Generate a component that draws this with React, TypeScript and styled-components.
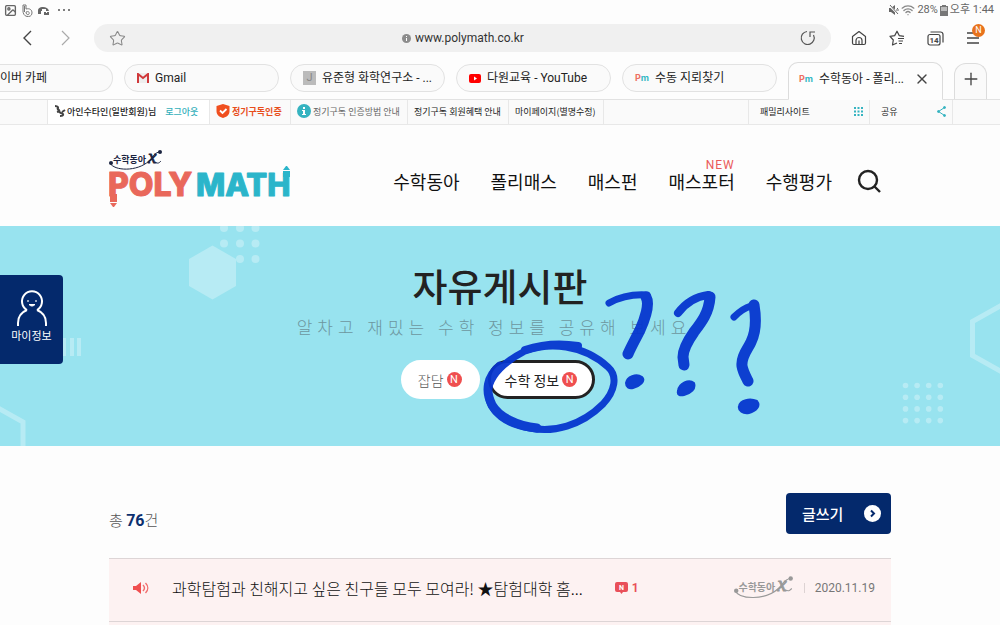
import React from "react";
import styled, { createGlobalStyle, css } from "styled-components";
import { Star, X, Plus, Wifi, Image as ImageIcon } from "lucide-react";

const sans = `"Noto Sans CJK KR", "Noto Sans", sans-serif`;
const ui = `Roboto, "Noto Sans CJK KR", sans-serif`;

const GlobalStyle = createGlobalStyle`
  *, *::before, *::after { box-sizing: border-box; }
  body { margin: 0; background: #fdfdfd; color: #222; font-family: ${sans}; overflow-x: hidden; }
  button, input { font: inherit; color: inherit; }
  button { border: 0; padding: 0; background: none; cursor: pointer; }
  a { color: inherit; text-decoration: none; }
  h1, p { margin: 0; }
  svg { display: block; flex: none; }
`;

/* Device status bar */
const StatusBar = styled.div`
  display: flex;
  justify-content: space-between;
  align-items: center;
  height: 20px;
  padding: 0 6px 0 4px;
  font: 11px/20px ${ui};
  color: #666;
`;
const StatusGroup = styled.div<{ $gap: number }>`
  display: flex;
  align-items: center;
  gap: ${(p) => p.$gap}px;
`;

/* Browser toolbar */
const Toolbar = styled.div`
  display: flex;
  align-items: center;
  height: 36px;
  padding: 0 16px;
  color: #444;
`;
const IconButton = styled.button<{ $faded?: boolean }>`
  position: relative;
  display: flex;
  align-items: center;
  justify-content: center;
  width: 22px;
  height: 28px;
  flex: none;
  color: ${(p) => (p.$faded ? "#aaa" : "#444")};
`;
const HistoryButtons = styled.div`
  display: flex;
  gap: 17px;
  margin-right: 17px;
`;
const AddressBar = styled.div`
  display: flex;
  align-items: center;
  flex: 1;
  height: 28px;
  padding: 0 12px;
  border-radius: 14px;
  background: #f0f0f0;
`;
const Address = styled.label`
  display: flex;
  flex: 1;
  align-items: center;
  justify-content: center;
  gap: 4px;
  padding-left: 4px;
`;
const AddressInput = styled.input`
  width: 112px;
  padding: 0;
  border: 0;
  outline: 0;
  background: transparent;
  font: 12px/20px ${ui};
  color: #333;
`;
const ToolbarActions = styled.div`
  display: flex;
  gap: 16px;
  margin-left: 17px;
`;
const MenuBadge = styled.span`
  position: absolute;
  top: 0;
  right: -1px;
  width: 13px;
  height: 13px;
  border-radius: 50%;
  background: #e8731c;
  color: #fff;
  font: 9px/13px ${ui};
  text-align: center;
`;

/* Browser tabs */
const TabStrip = styled.div`
  display: flex;
  align-items: center;
  gap: 11px;
  height: 44px;
  border-bottom: 1px solid #e2e2e2;
`;
const Tab = styled.button<{ $cut?: boolean; $active?: boolean }>`
  display: flex;
  align-items: center;
  gap: 6px;
  width: 155px;
  height: 28px;
  padding: 1px 12px 0;
  border: 1px solid #e2e2e2;
  border-radius: 14px;
  background: #fafafa;
  font: 12px/20px ${ui};
  color: #222;
  white-space: nowrap;
  ${(p) =>
    p.$cut &&
    css`
      width: 113px;
      padding: 1px 0 0;
      border-left: 0;
      border-radius: 0 14px 14px 0;
    `}
  ${(p) =>
    p.$active &&
    css`
      align-self: flex-end;
      height: 38px;
      margin-bottom: -1px;
      padding: 0 12px 5px 10px;
      border-color: #dcdcdc;
      border-bottom-color: #fdfdfd;
      border-radius: 10px 10px 0 0;
      background: #fdfdfd;
    `}
`;
const TabTitle = styled.span`
  flex: 1;
  text-align: left;
`;
const NewTab = styled.button`
  display: flex;
  align-items: center;
  justify-content: center;
  align-self: flex-end;
  width: 33px;
  height: 36px;
  padding-bottom: 6px;
  border: 1px solid #dcdcdc;
  border-bottom: 0;
  border-radius: 12px 12px 0 0;
  background: #fafafa;
  color: #444;
`;
const LetterIcon = styled.span`
  width: 13px;
  height: 14px;
  background: #bbb;
  color: #888;
  font: 11px/14px ${ui};
  text-align: center;
`;
const PmIcon = styled.span`
  display: flex;
  width: 14px;
  color: #35b8c4;
  font: 700 9px/14px Inter, sans-serif;
`;
const Coral = styled.span`
  color: #ee6f62;
`;

/* Site utility bar */
const UtilityBar = styled.div`
  height: 25px;
  padding: 0 47px 0 47px;
  border-bottom: 1px solid #e8e8e8;
  background: #fafafa;
`;
const UtilityRow = styled.div`
  display: flex;
  height: 24px;
  border: 1px solid #e8e8e8;
  border-width: 0 1px;
`;
const UtilityLink = styled.a<{ $width: number; $tone?: string; $bold?: boolean; $right?: boolean }>`
  display: flex;
  align-items: center;
  gap: 2px;
  width: ${(p) => p.$width}px;
  padding: 0 0 2px 6px;
  border-right: 1px solid #e8e8e8;
  font-size: 9px;
  font-weight: ${(p) => (p.$bold ? 700 : 400)};
  color: ${(p) => p.$tone || "#222"};
  white-space: nowrap;
  ${(p) =>
    p.$right &&
    css`
      justify-content: space-between;
      padding: 0 6px 2px 11px;
      border-right: 0;
      border-left: 1px solid #e8e8e8;
    `}
`;
const Account = styled.div`
  display: flex;
  align-items: center;
  gap: 1px;
  width: 162px;
  padding: 0 0 2px 6px;
  border-right: 1px solid #e8e8e8;
  background: #fff;
  font-size: 9px;
  font-weight: 500;
  white-space: nowrap;
`;
const Logout = styled.button`
  margin-left: 8px;
  color: #35b0bb;
`;
const Spacer = styled.div`
  flex: 1;
`;

/* Site header */
const Container = styled.div`
  width: 100%;
  max-width: 782px;
  margin: 0 auto;
`;
const Header = styled(Container).attrs({ as: "header" })`
  display: flex;
  align-items: center;
  justify-content: space-between;
  height: 101px;
  padding-right: 10px;
`;
const Nav = styled.nav`
  display: flex;
  align-items: center;
  gap: 31px;
  padding-top: 10px;
  font-size: 18px;
  font-weight: 400;
  line-height: 26px;
  color: #111;
`;
const NavLink = styled.a`
  position: relative;
  white-space: nowrap;
`;
const NewMark = styled.span`
  position: absolute;
  top: -11px;
  right: 0;
  color: #ea5a5a;
  font: 12px/16px ${ui};
  letter-spacing: 1px;
`;
const SearchButton = styled.button`
  margin-left: -6px;
`;

/* Hero */
const Hero = styled.section`
  position: relative;
  display: flex;
  flex-direction: column;
  align-items: center;
  padding: 34px 0 47px;
  background: #98e3ef;
  overflow: hidden;
`;
const Pattern = styled.svg<{ $right?: boolean }>`
  position: absolute;
  top: 0;
  ${(p) => (p.$right ? "right: 0;" : "left: 0;")}
`;
const Title = styled.h1`
  position: relative;
  font-size: 38px;
  font-weight: 500;
  line-height: 50px;
`;
const Subtitle = styled.p`
  position: relative;
  margin-top: 5px;
  padding-right: 12px;
  font-size: 17px;
  font-weight: 300;
  line-height: 24px;
  letter-spacing: 5px;
  color: #6d979f;
`;
const Categories = styled.div`
  position: relative;
  display: flex;
  gap: 8px;
  margin-top: 21px;
  padding-right: 4px;
`;
const Category = styled.button<{ $selected?: boolean }>`
  display: flex;
  align-items: center;
  gap: 3px;
  height: 39px;
  padding: 0 15px 0 14px;
  border: 3px solid ${(p) => (p.$selected ? "#222" : "#fff")};
  border-radius: 20px;
  background: #fff;
  font-size: 14px;
  line-height: 24px;
  font-weight: ${(p) => (p.$selected ? 400 : 300)};
  color: ${(p) => (p.$selected ? "#222" : "#555")};
`;
const NewDot = styled.span`
  width: 15px;
  height: 15px;
  border-radius: 50%;
  background: #ef4f4f;
  color: #fff;
  font: 11px/15px ${ui};
  text-align: center;
`;
const MyInfo = styled.button`
  position: absolute;
  top: 49px;
  left: 0;
  display: flex;
  flex-direction: column;
  align-items: center;
  width: 63px;
  height: 89px;
  padding-top: 15px;
  border-radius: 0 4px 4px 0;
  background: #04296c;
  color: #fff;
  font-size: 11px;
  line-height: 18px;
`;
const Doodle = styled.svg`
  position: absolute;
  top: 54px;
  left: calc(50% - 24px);
  pointer-events: none;
`;

/* Board */
const BoardHead = styled.div`
  display: flex;
  align-items: center;
  justify-content: space-between;
  padding: 47px 0 24px;
`;
const Count = styled.p`
  padding-top: 14px;
  font-size: 15px;
  font-weight: 300;
  line-height: 24px;
  color: #555;
`;
const Total = styled.strong`
  font: 700 16px/24px ${ui};
  color: #0c2f6e;
`;
const WriteButton = styled.button`
  display: flex;
  align-items: center;
  justify-content: space-between;
  width: 105px;
  height: 41px;
  padding: 0 10px 0 16px;
  border-radius: 4px;
  background: #04296c;
  color: #fff;
  font-size: 15px;
  font-weight: 500;
`;
const Posts = styled.div`
  padding-bottom: 4px;
  border-top: 1px solid #ddd5d6;
  background: #fdf2f2;
`;
const Post = styled.article`
  display: flex;
  align-items: center;
  height: 63px;
  padding: 0 16px 4px 24px;
  border-bottom: 1px solid #ddd5d6;
`;
const PostTitle = styled.a`
  margin-left: 23px;
  font-size: 16px;
  font-weight: 300;
  color: #111;
  white-space: nowrap;
`;
const Comments = styled.span`
  display: flex;
  align-items: center;
  gap: 4px;
  margin-left: 32px;
  color: #e9505a;
  font: 700 12px/20px ${ui};
`;
const Meta = styled.div`
  display: flex;
  align-items: center;
  gap: 10px;
  margin-left: auto;
`;
const PostDate = styled.time`
  padding-left: 10px;
  border-left: 1px solid #ddd3d3;
  color: #777;
  font: 12px/10px ${ui};
`;

/* The magazine's script mark: a small name over a swoosh that ends in an x */
function Brand({ color, size }: { color: string; size: number }) {
  return (
    <svg width={size} height={Math.round((size * 24) / 54)} viewBox="0 0 54 24" fill="none" overflow="visible">
      <text x="4" y="14" fontSize="9" fontWeight="700" fontFamily="Noto Sans CJK KR" fill={color}>수학동아</text>
      <text x="39" y="14" fontSize="19" fontStyle="italic" fontFamily="Liberation Serif" fill={color} stroke={color} strokeWidth=".8">x</text>
      <circle cx="2" cy="14" r="2" fill={color} />
      <circle cx="51" cy="3" r="2" fill={color} />
      <path d="M1 14c4 8 27 9 39-2 4-4 6-9 11-9" stroke={color} strokeWidth="1" />
      <path d="M46 13c3 2 4 1 6-1" stroke={color} strokeWidth="1" />
    </svg>
  );
}

function Logo() {
  return (
    <svg width="182" height="66" viewBox="0 -6 182 66" role="img" aria-label="수학동아 POLYMATH">
      <Brand color="#1b2440" size={54} />
      <g fontFamily="Inter" fontWeight="800" strokeWidth="1" strokeLinejoin="round">
        <text x="-1" y="47" fontSize="32" fill="#e9685b" stroke="#e9685b">POLY</text>
        <text x="87" y="47" fontSize="31" fill="#2bb5ca" stroke="#2bb5ca">MATH</text>
      </g>
      <path d="M1 45h7v8H1zM1 54h7l-3 4H4z" fill="#e9685b" />
      <path d="M174 22h7v6h-7zM174 21h7l-3-4h-1z" fill="#2bb5ca" />
    </svg>
  );
}

const Pm = () => (
  <PmIcon><Coral>P</Coral>m</PmIcon>
);

export default function App() {
  return (
    <>
      <GlobalStyle />
      <StatusBar>
        <StatusGroup $gap={5}>
          <ImageIcon size={13} strokeWidth={2.5} />
          <svg width="11" height="13" viewBox="0 0 11 13" fill="none" stroke="#777" strokeWidth="1">
            <path d="M1 1h3v4c4-1 6 1 6 4s-3 4-5 3.500C2 12 1 9 1 7zM4 8c2-1 4 0 3 2s-3 0-3-2zM2.500 2v6" />
          </svg>
          <svg width="12" height="11" viewBox="0 0 12 11" fill="#666">
            <path d="M0 6c0-3 2-4 5-4s5 1 6 4H8V4H4v2H3v3H0zM6 7h2v1h1V7h2v3H6z" fillRule="evenodd" />
          </svg>
          <svg width="16" height="4" viewBox="0 0 16 4" fill="#555">
            <circle cx="4" cy="2" r="1" /><circle cx="9" cy="2" r="1" /><circle cx="14" cy="2" r="1" />
          </svg>
        </StatusGroup>
        <StatusGroup $gap={2}>
          <svg width="10" height="10" viewBox="0 0 10 10" fill="#666"><path d="M0 3h2l4-3v10L2 7H0z" /><path d="M0 0l10 10" stroke="#fdfdfd" strokeWidth="2" /><path d="M1 0l8 9M8 3l1 1M7 5h3" stroke="#666" /></svg>
          <Wifi size={14} strokeWidth={2.3} color="#888" />
          <span>28%</span>
          <svg width="8" height="11" viewBox="0 0 8 11" fill="#777"><path d="M2 0h4v1h2v10H0V1h2zM1 2v4h6V2z" fillRule="evenodd" /><path d="M1 2h6v4H1z" fill="#bbb" /></svg>
          <span>오후 1:44</span>
        </StatusGroup>
      </StatusBar>

      <Toolbar>
        <HistoryButtons>
          <IconButton aria-label="뒤로">
            <svg width="10" height="16" viewBox="0 0 10 16" fill="none" stroke="currentColor" strokeWidth="1.400"><path d="M9 1L2 8l7 7" /></svg>
          </IconButton>
          <IconButton aria-label="앞으로" $faded>
            <svg width="10" height="16" viewBox="0 0 10 16" fill="none" stroke="currentColor" strokeWidth="1.200"><path d="M1 1l7 7-7 7" /></svg>
          </IconButton>
        </HistoryButtons>
        <AddressBar>
          <IconButton aria-label="북마크 추가" $faded><Star size={17} strokeWidth={1.5} color="#888" /></IconButton>
          <Address>
            <svg width="9" height="9" viewBox="0 0 9 9"><circle cx="4.500" cy="4.500" r="4.500" fill="#8c8c8c" /><path d="M4 2h1v1H4zM4 4h1v3H4z" fill="#fff" /></svg>
            <AddressInput aria-label="주소" defaultValue="www.polymath.co.kr" />
          </Address>
          <IconButton aria-label="새로고침">
            <svg width="16" height="16" viewBox="0 0 16 16" fill="none" stroke="#555" strokeWidth="1.200"><path d="M7 1.500A6.500 6.500 0 1 0 13.500 5M10 7V2h5" /></svg>
          </IconButton>
        </AddressBar>
        <ToolbarActions>
          <IconButton aria-label="홈">
            <svg width="16" height="16" viewBox="0 0 16 16" fill="none" stroke="currentColor" strokeWidth="1.200" strokeLinejoin="round"><path d="M1.500 6.500L8 1.500l6.500 5V13a1.500 1.500 0 0 1-1.500 1.500H3A1.500 1.500 0 0 1 1.500 13zM5 14.500v-4a3 3 0 0 1 6 0v4M8 14.500v-4" /></svg>
          </IconButton>
          <IconButton aria-label="북마크">
            <svg width="16" height="16" viewBox="0 0 16 16" fill="none" stroke="currentColor" strokeWidth="1.200" strokeLinejoin="round"><path d="M8 13l-4.500 2 .8-5L1 6.300l4.700-.7L8 1.200l2.200 4.400 4.800.7M9 8.500h6M9.500 11h4.500M10 13.500h3" /></svg>
          </IconButton>
          <IconButton aria-label="탭 14개">
            <svg width="17" height="15" viewBox="0 0 17 15" fill="none" stroke="currentColor" strokeWidth="1.200">
              <rect x="1" y="3.500" width="12" height="10.500" rx="2" /><path d="M3.500 1h10a2.500 2.500 0 0 1 2.500 2.500v8" />
              <text x="2.500" y="12" fontSize="8" fontFamily="Roboto" fontWeight="700" fill="#444" stroke="none">14</text>
            </svg>
          </IconButton>
          <IconButton aria-label="메뉴">
            <svg width="14" height="12" viewBox="0 0 14 12" stroke="currentColor" strokeWidth="1.300"><path d="M1 1h6M1 6h12M1 11h12" /></svg>
            <MenuBadge>N</MenuBadge>
          </IconButton>
        </ToolbarActions>
      </Toolbar>

      <TabStrip>
        <Tab $cut><TabTitle>이버 카페</TabTitle></Tab>
        <Tab>
          <svg width="12" height="10" viewBox="0 0 12 10"><path d="M0 0h12v10H0z" fill="#eee" /><path d="M1 10V1l5 4 5-4v9" fill="none" stroke="#d0393b" strokeWidth="2" /></svg>
          <TabTitle>Gmail</TabTitle>
        </Tab>
        <Tab><LetterIcon>J</LetterIcon><TabTitle>유준형 화학연구소 - ...</TabTitle></Tab>
        <Tab>
          <svg width="12" height="9" viewBox="0 0 12 9"><rect width="12" height="9" rx="2" fill="#f00" /><path d="M5 2.500v4l3-2z" fill="#fff" /></svg>
          <TabTitle>다원교육 - YouTube</TabTitle>
        </Tab>
        <Tab><Pm /><TabTitle>수동 지뢰찾기</TabTitle></Tab>
        <Tab $active><Pm /><TabTitle>수학동아 - 폴리...</TabTitle><X size={16} strokeWidth={2} color="#444" /></Tab>
        <NewTab aria-label="새 탭"><Plus size={20} strokeWidth={1.6} /></NewTab>
      </TabStrip>

      <UtilityBar>
        <UtilityRow>
          <Account>
            <svg width="12" height="12" viewBox="0 0 12 12" fill="none" stroke="#444" strokeWidth="2"><path d="M1 1c3 0 4 2 2 3 2 0 3 2 0 3M6 5c-2 1-1 2 1 3 3 1 3 3-1 3M11 5L8 7" /></svg>
            <span>아인수타인(일반회원)님</span>
            <Logout>로그아웃</Logout>
          </Account>
          <UtilityLink href="#" $width={81} $tone="#e84e1b" $bold>
            <svg width="14" height="14" viewBox="0 0 13 14"><path d="M6.500 0L13 2v5c0 4-3 6-6.500 7C3 13 0 11 0 7V2z" fill="#f04f1f" /><path d="M3.500 6.500l2.500 2.500 4-4" stroke="#fff" strokeWidth="1.800" fill="none" /></svg>
            정기구독인증
          </UtilityLink>
          <UtilityLink href="#" $width={117} $tone="#666">
            <svg width="14" height="14" viewBox="0 0 14 14"><circle cx="7" cy="7" r="7" fill="#35b3c0" /><path d="M6 3h2v2H6zM5 6h3v4h1v1H5v-1h1V7H5z" fill="#fff" /></svg>
            정기구독 인증방법 안내
          </UtilityLink>
          <UtilityLink href="#" $width={101}>정기구독 회원혜택 안내</UtilityLink>
          <UtilityLink href="#" $width={95}>마이페이지(별명수정)</UtilityLink>
          <Spacer />
          <UtilityLink href="#" $width={121} $right>
            패밀리사이트
            <svg width="9" height="9" viewBox="0 0 9 9" fill="#35b3c0">
              {[0, 1, 2].map((r) => [0, 1, 2].map((c) => <rect key={`${r}${c}`} x={c * 3.5} y={r * 3.5} width="2" height="2" />))}
            </svg>
          </UtilityLink>
          <UtilityLink href="#" $width={83} $right>
            공유
            <svg width="9" height="11" viewBox="0 0 9 11" fill="#35b3c0" stroke="#35b3c0"><path d="M7.500 1.500l-6 4 6 4" fill="none" /><circle cx="7.500" cy="1.500" r="1" /><circle cx="1.500" cy="5.500" r="1" /><circle cx="7.500" cy="9.500" r="1" /></svg>
          </UtilityLink>
        </UtilityRow>
      </UtilityBar>

      <Header>
        <a href="#"><Logo /></a>
        <Nav>
          <NavLink href="#">수학동아</NavLink>
          <NavLink href="#">폴리매스</NavLink>
          <NavLink href="#">매스펀</NavLink>
          <NavLink href="#">매스포터<NewMark>NEW</NewMark></NavLink>
          <NavLink href="#">수행평가</NavLink>
          <SearchButton aria-label="검색">
            <svg width="24" height="24" viewBox="0 0 24 24" fill="none" stroke="#222" strokeWidth="2.400"><circle cx="11" cy="11" r="9" /><path d="M17.500 17.500l5.500 5.500" /></svg>
          </SearchButton>
        </Nav>
      </Header>

      <Hero>
        <Pattern width="270" height="220" viewBox="0 0 270 220" fill="#fff" fillOpacity=".3">
          <path d="M212.500 19.500L236 33v27l-23.500 13.500L189 60V33z" />
          {[[224, 2], [240, 2], [255.5, 2], [224, 17.5], [240, 17.5], [255.5, 17.5], [240, 33], [255.5, 33]].map(([x, y]) => (
            <circle key={`${x}-${y}`} cx={x} cy={y} r="4" />
          ))}
          <path d="M62 112h4v18h-4zM70 112h4v18h-4zM77 112h4v18h-4z" />
          <path d="M-2 182L23 196v28" fill="none" stroke="#fff" strokeOpacity=".3" strokeWidth="5" />
        </Pattern>
        <Pattern $right width="100" height="220" viewBox="0 0 100 220" fill="#fff" fillOpacity=".3">
          {[0, 1, 2, 3].map((r) => [0, 1, 2, 3].map((c) => <circle key={`${r}${c}`} cx={5.5 + c * 11.6} cy={159.5 + r * 11.7} r="2.800" />))}
          <path d="M102 79L72.500 95.500v34L102 146" fill="none" stroke="#fff" strokeOpacity=".3" strokeWidth="5" />
        </Pattern>
        <Title>자유게시판</Title>
        <Subtitle>알차고 재밌는 수학 정보를 공유해 보세요</Subtitle>
        <Categories>
          <Category>잡담<NewDot>N</NewDot></Category>
          <Category $selected>수학 정보<NewDot>N</NewDot></Category>
        </Categories>
        <MyInfo>
          <svg width="32" height="36" viewBox="0 0 32 36" fill="none" stroke="#fff" strokeWidth="2">
            <path d="M2 36v-3c0-7 4-11 9-13M30 36v-3c0-7-4-11-9-13" />
            <path d="M11 20a10 10 0 1 1 10 0" />
            <path d="M13 14.500c2 2 4 2 6 0z" fill="#fff" strokeWidth="1" />
            <circle cx="12" cy="11" r=".5" strokeWidth="1" /><circle cx="20" cy="11" r=".5" strokeWidth="1" />
          </svg>
          마이정보
        </MyInfo>
        <Doodle width="300" height="166" viewBox="476 280 300 166" fill="none" stroke="#0535cf" strokeLinecap="round" strokeLinejoin="round" opacity=".94">
          <path d="M525 351c24-9 58-7 83 16 10 9 7 24-5 37-22 22-50 29-73 24-22-3-41-15-42-35 1-18 16-31 37-42" strokeWidth="7" />
          <path d="M525 350c15-5 35-7 53-4" strokeWidth="8" />
          <path d="M500 366c-13 11-15 25-8 39 7 12 25 21 45 23" strokeWidth="9" />
          <path d="M609 303c9-5 23-9 38-8" strokeWidth="7" />
          <path d="M646 297c4 7-1 22-6 33-5 10-9 17-12 24" strokeWidth="11" />
          <path d="M678 313c6-8 15-16 30-18" strokeWidth="8" />
          <path d="M710 297c-1 16-9 26-16 35-7 10-11 18-11 25l1 8" strokeWidth="11" />
          <path d="M734 317c5-5 10-9 17-11" strokeWidth="7" />
          <path d="M754 305c2 12 2 27-3 37-3 7-10 14-9 24 1 6 4 11 6 15" strokeWidth="11" />
          <g fill="#0535cf" strokeWidth="2">
            <path d="M626 383c1-6 10-10 16-6 4 4-2 9-9 11-4 1-7-1-7-5zM678 391c1-8 11-12 16-8 2 6-3 10-10 12-4 1-7 0-6-4zM739 406c1-6 11-8 18-5 4 5-1 10-8 12-6 1-11-2-10-7z" />
          </g>
        </Doodle>
      </Hero>

      <Container as="main">
        <BoardHead>
          <Count>총 <Total>76</Total>건</Count>
          <WriteButton>
            글쓰기
            <svg width="17" height="17" viewBox="0 0 17 17" fill="none"><circle cx="8.500" cy="8.500" r="8.500" fill="#fff" /><path d="M7 5.500l3 3-3 3" stroke="#04296c" strokeWidth="2" /></svg>
          </WriteButton>
        </BoardHead>
        <Posts>
          <Post>
            <svg width="16" height="12" viewBox="0 0 16 12" fill="#f04f50"><path d="M0 4h3l5-4v12L3 8H0z" /><path d="M10 3c2 2 2 4 0 6M12.500 1c3 3 3 7 0 10" fill="none" stroke="#f06c6c" strokeWidth="1.400" /></svg>
            <PostTitle href="#">과학탐험과 친해지고 싶은 친구들 모두 모여라! ★탐험대학 홈...</PostTitle>
            <Comments>
              <svg width="13" height="12" viewBox="0 0 13 12"><path d="M2 0h9a2 2 0 0 1 2 2v6a2 2 0 0 1-2 2H8l-1.500 2L5 10H2a2 2 0 0 1-2-2V2a2 2 0 0 1 2-2z" fill="#e9505a" /><text x="4" y="8" fontSize="7" fontFamily="Roboto" fill="#fff">N</text></svg>
              1
            </Comments>
            <Meta>
              <Brand color="#999" size={60} />
              <PostDate dateTime="2020-11-19">2020.11.19</PostDate>
            </Meta>
          </Post>
        </Posts>
      </Container>
    </>
  );
}
